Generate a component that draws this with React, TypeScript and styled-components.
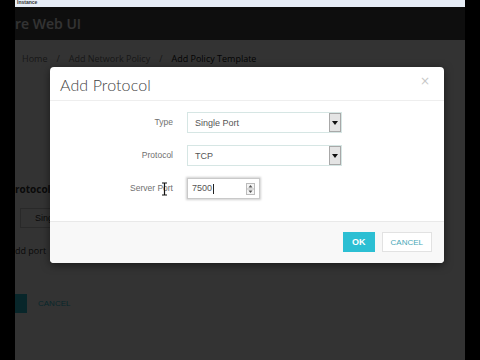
import React from "react";
import styled, { createGlobalStyle } from "styled-components";

const GlobalStyle = createGlobalStyle`
  html, body { margin: 0; padding: 0; background: #000; }
  body { font-family: "Liberation Sans", Arial, sans-serif; }
  * { box-sizing: border-box; }
`;

const Frame = styled.div`
  width: 480px;
  height: 360px;
  display: grid;
  grid-template-columns: 15px 450px 15px;
  background: #000;
  overflow: hidden;
`;

const Bar = styled.div`
  background: #000;
`;

const Screen = styled.div`
  display: flex;
  flex-direction: column;
  height: 360px;
  overflow: hidden;
`;

const TopStrip = styled.div`
  height: 7px;
  flex: none;
  background: #e7edf6;
  overflow: hidden;
  color: #333;
  font-weight: bold;
`;

const StripText = styled.div`
  font-size: 5px;
  line-height: 5px;
  padding-left: 2px;
`;

const Page = styled.div`
  position: relative;
  flex: 1;
  display: flex;
  flex-direction: column;
  background: #fff;
`;

const Navbar = styled.div`
  height: 33px;
  flex: none;
  background: #474747;
  display: flex;
  align-items: center;
  color: #fff;
  font-family: "Open Sans", sans-serif;
  font-size: 14px;
  font-weight: 600;
`;

const Breadcrumb = styled.div`
  display: flex;
  gap: 9px;
  padding: 12px 0 0 7px;
  font-family: "Open Sans", sans-serif;
  font-size: 9px;
  color: #999;
`;

const Crumb = styled.span<{ $active?: boolean }>`
  color: ${(p) => (p.$active ? "#111" : "#777")};
`;

const BackForm = styled.div`
  display: flex;
  flex-direction: column;
  padding-top: 117px;
`;

const BackHeading = styled.div`
  font-family: "Open Sans", sans-serif;
  font-size: 10px;
  font-weight: 700;
  color: #333;
`;

const BackSelect = styled.div`
  margin: 12px 0 0 5px;
  width: 160px;
  height: 20px;
  border: 1px solid #ccc;
  padding-left: 14px;
  font-size: 9px;
  line-height: 18px;
  color: #333;
`;

const BackText = styled.div`
  margin-top: 16px;
  font-family: "Open Sans", sans-serif;
  font-size: 9px;
  color: #333;
`;

const BackActions = styled.div`
  display: flex;
  align-items: center;
  gap: 11px;
  margin-top: 37px;
`;

const BackOk = styled.div`
  width: 12px;
  height: 19px;
  background: #2cbfd3;
`;

const BackCancel = styled.div`
  font-size: 8px;
  color: #2cbfd3;
`;

const Backdrop = styled.div`
  position: absolute;
  inset: 0;
  background: rgba(0, 0, 0, 0.8);
`;

const Modal = styled.div`
  position: absolute;
  left: 35px;
  top: 60px;
  width: 394px;
  height: 196px;
  background: #fff;
  border-radius: 4px;
  box-shadow: 0 2px 8px rgba(0, 0, 0, 0.5);
  display: flex;
  flex-direction: column;
  overflow: hidden;
`;

const Header = styled.div`
  height: 34px;
  flex: none;
  display: flex;
  align-items: center;
  justify-content: space-between;
  padding: 2px 14px 0 10px;
  border-bottom: 1px solid #eeeeee;
`;

const Title = styled.div`
  font-family: Lato, "Open Sans", sans-serif;
  font-size: 16px;
  font-weight: 300;
  color: #3f3f3f;
  letter-spacing: 0.1px;
`;

const Close = styled.div`
  font-family: "DejaVu Sans", sans-serif;
  font-size: 12px;
  color: #c8c8c8;
  margin-top: -8px;
`;

const Body = styled.div`
  flex: 1;
  display: flex;
  flex-direction: column;
  gap: 12px;
  padding-top: 11px;
`;

const Row = styled.div`
  display: grid;
  grid-template-columns: 123px auto;
  column-gap: 14px;
  align-items: center;
  height: 21px;
`;

const Label = styled.div`
  position: relative;
  text-align: right;
  font-size: 8.5px;
  color: #707070;
  margin-top: -2px;
`;

const Cursor = styled.svg`
  position: absolute;
  right: 5px;
  top: -1px;
`;

const Select = styled.div`
  width: 155px;
  height: 21px;
  border: 1px solid #d6e6e4;
  background: #fff;
  display: flex;
  align-items: center;
  justify-content: space-between;
  padding: 0 0 0 7px;
  font-size: 9px;
  color: #555;
`;

const ArrowBox = styled.div`
  width: 12px;
  height: 19px;
  background: #e4e4e4;
  border: 1px solid #a8a8a8;
  display: flex;
  align-items: center;
  justify-content: center;
`;

const Input = styled.div`
  width: 73px;
  height: 21px;
  border: 1px solid #c9c9c9;
  box-shadow: 0 0 2px 1px #d0d0d0;
  display: flex;
  align-items: center;
  justify-content: space-between;
  padding: 0 4px 0 4px;
  font-size: 9px;
  color: #555;
`;

const Caret = styled.span`
  display: inline-block;
  width: 1px;
  height: 10px;
  background: #222;
  vertical-align: middle;
  margin-left: 1px;
`;

const Footer = styled.div`
  height: 42px;
  flex: none;
  background: #f8f8f8;
  border-top: 1px solid #e9e9e9;
  display: flex;
  align-items: center;
  justify-content: flex-end;
  gap: 7px;
  padding: 0 12px 1px 0;
`;

const Button = styled.div<{ $primary?: boolean }>`
  height: 20px;
  padding: 0 8px;
  display: flex;
  align-items: center;
  justify-content: center;
  font-size: ${(p) => (p.$primary ? "9px" : "8px")};
  font-weight: ${(p) => (p.$primary ? 700 : 400)};
  color: ${(p) => (p.$primary ? "#fff" : "#4aa8b8")};
  background: ${(p) => (p.$primary ? "#2cbfd3" : "#fff")};
  border: 1px solid ${(p) => (p.$primary ? "#2cbfd3" : "#e2e2e2")};
`;

const DropArrow = () => (
  <svg width="6" height="4" viewBox="0 0 6 4">
    <path d="M0 0 L6 0 L3 4 Z" fill="#111" />
  </svg>
);

const Spinner = () => (
  <svg width="9" height="12" viewBox="0 0 9 12">
    <rect x="0.5" y="0.5" width="8" height="11" fill="#f4f4f4" stroke="#bbb" />
    <line x1="0.5" y1="6" x2="8.5" y2="6" stroke="#bbb" />
    <path d="M2.5 4.5 L4.5 2 L6.5 4.5 Z" fill="#555" />
    <path d="M2.5 7.5 L4.5 10 L6.5 7.5 Z" fill="#555" />
  </svg>
);

export default function App() {
  return (
    <>
      <GlobalStyle />
      <Frame>
        <Bar />
        <Screen>
          <TopStrip>
            <StripText>Instance</StripText>
          </TopStrip>
          <Page>
            <Navbar>re Web UI</Navbar>
            <Breadcrumb>
              <Crumb>Home</Crumb>
              <Crumb>/</Crumb>
              <Crumb>Add Network Policy</Crumb>
              <Crumb>/</Crumb>
              <Crumb $active>Add Policy Template</Crumb>
            </Breadcrumb>
            <BackForm>
              <BackHeading>rotocols</BackHeading>
              <BackSelect>Single Port</BackSelect>
              <BackText>dd port</BackText>
              <BackActions>
                <BackOk />
                <BackCancel>CANCEL</BackCancel>
              </BackActions>
            </BackForm>
            <Backdrop />
            <Modal>
              <Header>
                <Title>Add Protocol</Title>
                <Close>×</Close>
              </Header>
              <Body>
                <Row>
                  <Label>Type</Label>
                  <Select>
                    Single Port
                    <ArrowBox>
                      <DropArrow />
                    </ArrowBox>
                  </Select>
                </Row>
                <Row>
                  <Label>Protocol</Label>
                  <Select>
                    TCP
                    <ArrowBox>
                      <DropArrow />
                    </ArrowBox>
                  </Select>
                </Row>
                <Row>
                  <Label>
                    Server Port
                    <Cursor width="7" height="14" viewBox="0 0 7 14">
                      <path
                        d="M1 1 H6 M3.5 1 V13 M1 13 H6"
                        stroke="#111"
                        strokeWidth="1.2"
                        fill="none"
                      />
                    </Cursor>
                  </Label>
                  <Input>
                    <span>
                      7500
                      <Caret />
                    </span>
                    <Spinner />
                  </Input>
                </Row>
              </Body>
              <Footer>
                <Button $primary>OK</Button>
                <Button>CANCEL</Button>
              </Footer>
            </Modal>
          </Page>
        </Screen>
        <Bar />
      </Frame>
    </>
  );
}
